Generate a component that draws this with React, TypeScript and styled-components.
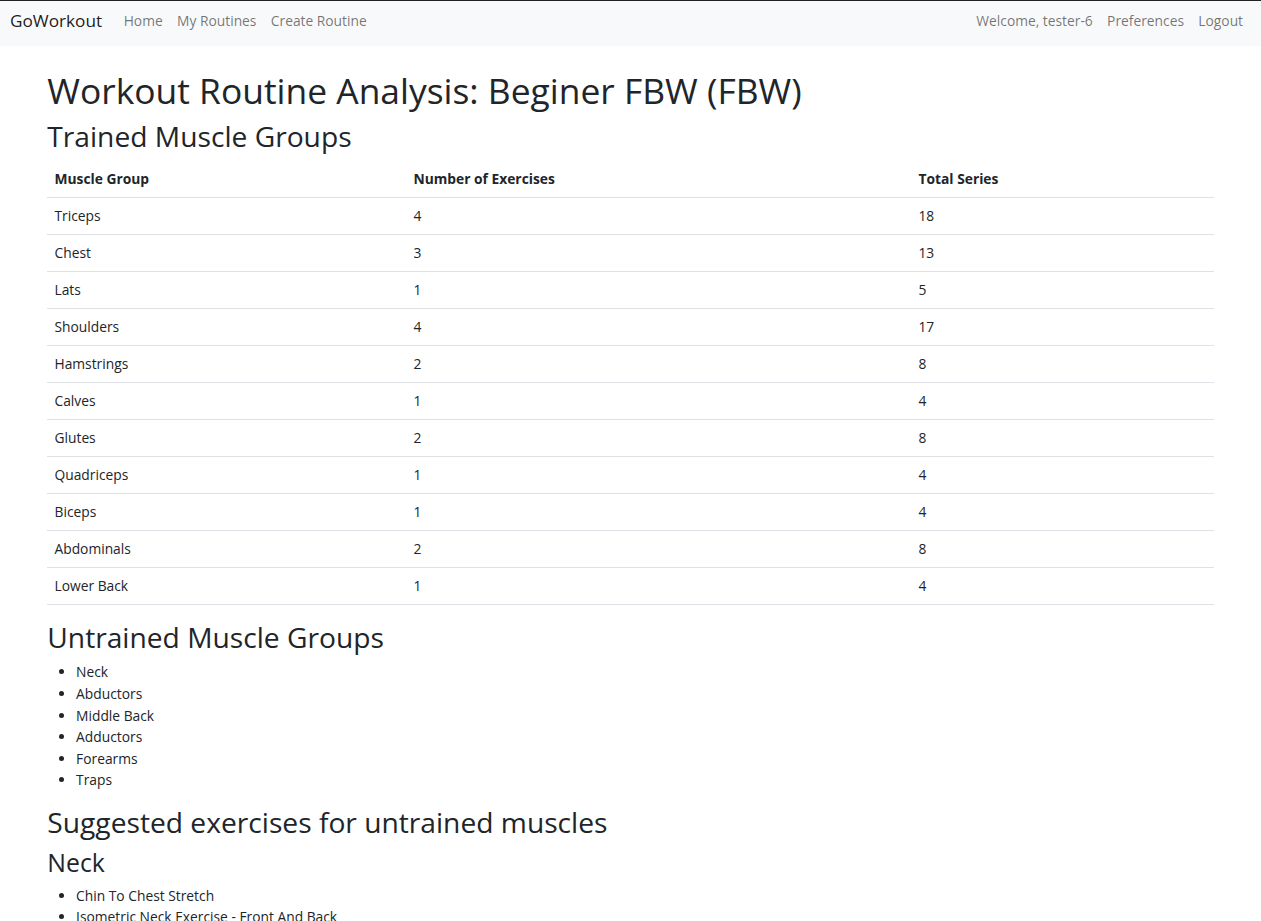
import React from "react";
import styled, { createGlobalStyle } from "styled-components";

const GlobalStyle = createGlobalStyle`
  * { box-sizing: border-box; }
  html, body { margin: 0; padding: 0; background: #fff; }
  body {
    font-family: "Open Sans", "Noto Sans", "Liberation Sans", sans-serif;
    font-size: 13.8px;
    line-height: 1.5;
    color: #212529;
    border-top: 1px solid #222;
  }
`;

const NavBar = styled.nav`
  background: #f8f9fa;
  height: 45px;
  display: flex;
  align-items: center;
  justify-content: space-between;
  padding: 0 10.8px 5px 10px;
`;

const NavGroup = styled.div`
  display: flex;
  align-items: center;
`;

const Brand = styled.a`
  font-size: 17.2px;
  color: rgba(0, 0, 0, 0.9);
  margin-right: 14.4px;
  text-decoration: none;
  line-height: 1.5;
`;

const NavLink = styled.a`
  padding: 0 7.2px;
  color: rgba(0, 0, 0, 0.55);
  text-decoration: none;
  font-size: 13.8px;
  line-height: 21.6px;
`;

const NavText = styled.span`
  padding: 0 7.2px;
  color: rgba(0, 0, 0, 0.55);
  font-size: 13.8px;
  line-height: 21.6px;
`;

const Container = styled.main`
  max-width: 1188px;
  margin: 22.6px auto 0;
  padding: 0 10.8px;
`;

const H1 = styled.h1`
  font-size: 35.4px;
  font-weight: 500;
  line-height: 43.2px;
  margin: 0 0 7.2px;
`;

const H2 = styled.h2`
  font-size: 28.2px;
  font-weight: 500;
  line-height: 34.6px;
  margin: 0 0 7.2px;
`;

const H3 = styled.h3`
  font-size: 24.8px;
  font-weight: 500;
  line-height: 30.2px;
  margin: 0 0 7.2px;
`;

const Table = styled.table`
  width: 100%;
  border-collapse: collapse;
  margin-bottom: 14.4px;
  font-size: 13.8px;
`;

const Th = styled.th<{ $w: string }>`
  width: ${(p) => p.$w};
  text-align: left;
  font-weight: 700;
  padding: 7.2px;
  height: 37px;
  border-bottom: 1px solid #dee2e6;
`;

const Td = styled.td`
  padding: 7.2px;
  height: 37px;
  border-bottom: 1px solid #dee2e6;
`;

const List = styled.ul`
  margin: 0 0 14.4px;
  padding-left: 28.8px;
  line-height: 21.6px;
`;

const rows: [string, number, number][] = [
  ["Triceps", 4, 18],
  ["Chest", 3, 13],
  ["Lats", 1, 5],
  ["Shoulders", 4, 17],
  ["Hamstrings", 2, 8],
  ["Calves", 1, 4],
  ["Glutes", 2, 8],
  ["Quadriceps", 1, 4],
  ["Biceps", 1, 4],
  ["Abdominals", 2, 8],
  ["Lower Back", 1, 4],
];

const untrained = ["Neck", "Abductors", "Middle Back", "Adductors", "Forearms", "Traps"];

export default function App() {
  return (
    <>
      <GlobalStyle />
      <NavBar>
        <NavGroup>
          <Brand href="#">GoWorkout</Brand>
          <NavLink href="#">Home</NavLink>
          <NavLink href="#">My Routines</NavLink>
          <NavLink href="#">Create Routine</NavLink>
        </NavGroup>
        <NavGroup>
          <NavText>Welcome, tester-6</NavText>
          <NavLink href="#">Preferences</NavLink>
          <NavLink href="#">Logout</NavLink>
        </NavGroup>
      </NavBar>
      <Container>
        <H1>Workout Routine Analysis: Beginer FBW (FBW)</H1>
        <H2>Trained Muscle Groups</H2>
        <Table>
          <thead>
            <tr>
              <Th $w="359px">Muscle Group</Th>
              <Th $w="505px">Number of Exercises</Th>
              <Th $w="auto">Total Series</Th>
            </tr>
          </thead>
          <tbody>
            {rows.map(([m, n, s]) => (
              <tr key={m}>
                <Td>{m}</Td>
                <Td>{n}</Td>
                <Td>{s}</Td>
              </tr>
            ))}
          </tbody>
        </Table>
        <H2>Untrained Muscle Groups</H2>
        <List>
          {untrained.map((u) => (
            <li key={u}>{u}</li>
          ))}
        </List>
        <H2>Suggested exercises for untrained muscles</H2>
        <H3>Neck</H3>
        <List>
          <li>Chin To Chest Stretch</li>
          <li>Isometric Neck Exercise - Front And Back</li>
          <li>Isometric Neck Exercise - Sides</li>
          <li>Lying Face Down Plate Neck Resistance</li>
        </List>
      </Container>
    </>
  );
}
